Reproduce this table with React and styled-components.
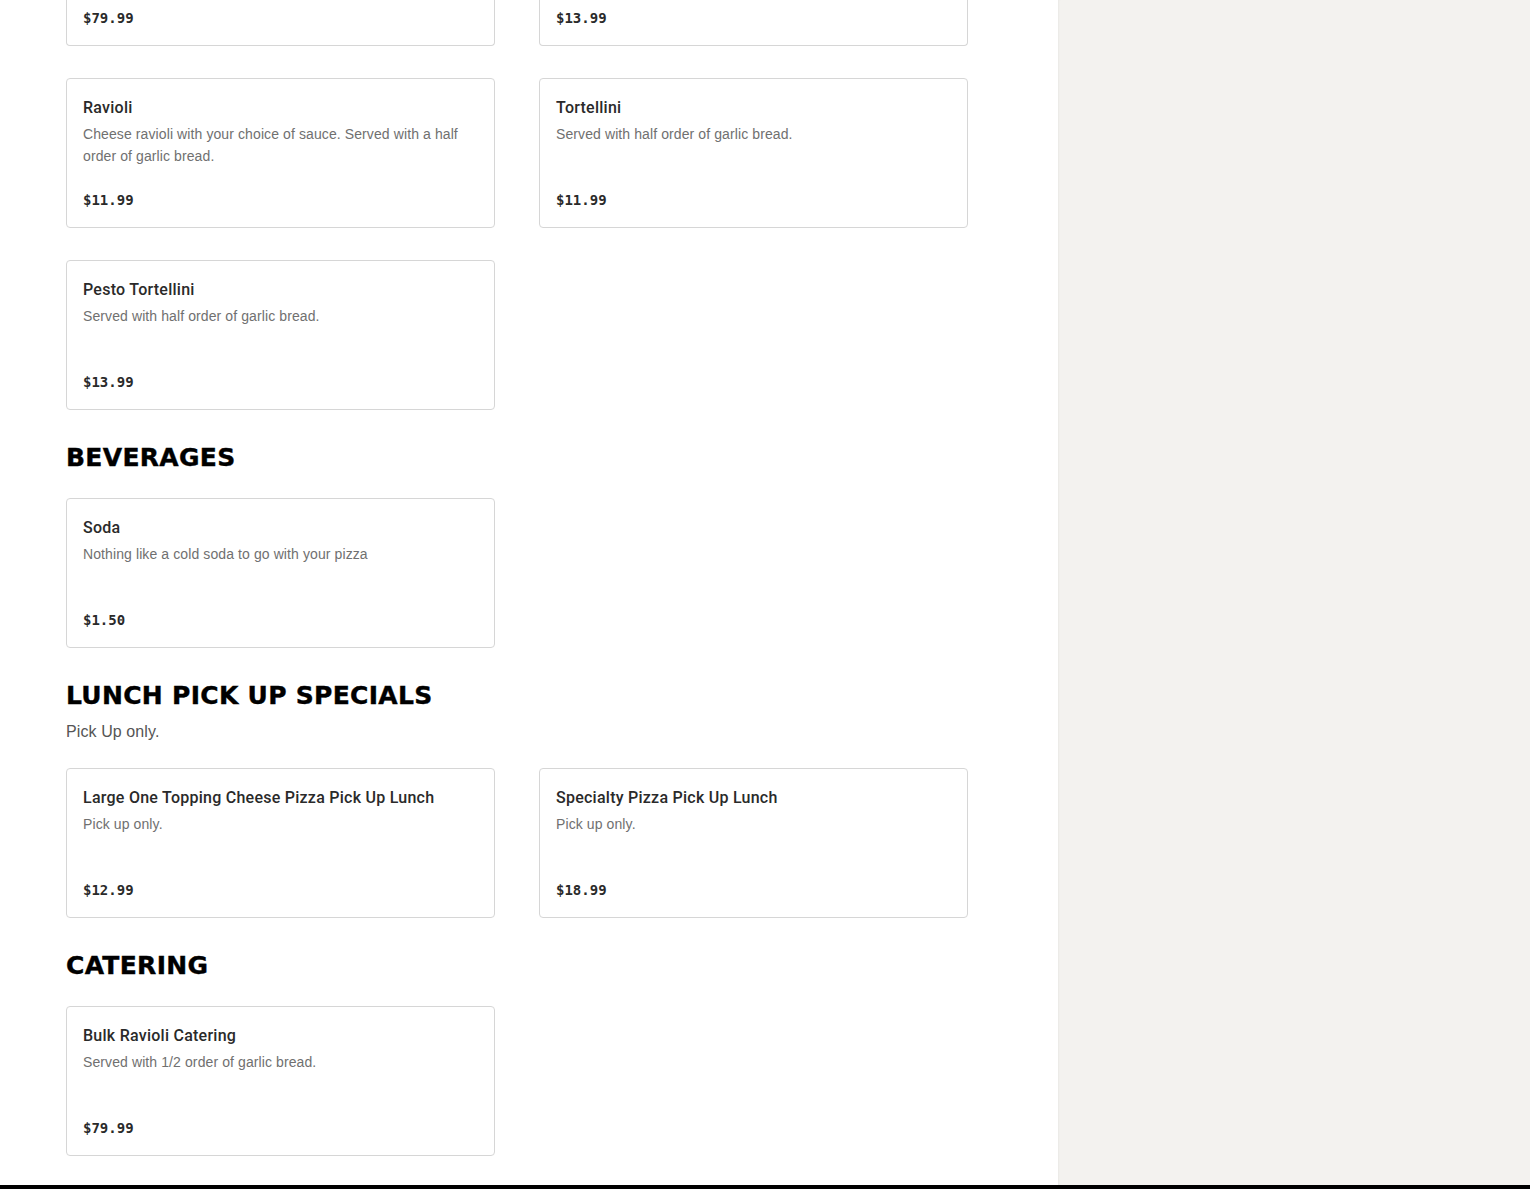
import styled, { createGlobalStyle } from "styled-components";

const GlobalStyle = createGlobalStyle`
  html, body {
    margin: 0;
    padding: 0;
    background: #fff;
    overflow: hidden;
  }
  body {
    font-family: "Liberation Sans", Arial, sans-serif;
  }
`;

const Page = styled.div`
  display: flex;
  flex-direction: column;
  width: 1530px;
  height: 1189px;
  overflow: hidden;
`;

const Body = styled.div`
  display: flex;
  flex: 1;
  min-height: 0;
`;

const Main = styled.main`
  width: 1058px;
  flex-shrink: 0;
  padding: 0 90px 0 66px;
  box-sizing: border-box;
  overflow: hidden;
`;

const Aside = styled.aside`
  flex: 1;
  background: #f3f2ef;
  box-shadow: inset 2px 0 2px -1px rgba(0, 0, 0, 0.04);
`;

const Footer = styled.footer`
  height: 4px;
  background: #000;
  flex-shrink: 0;
`;

const Section = styled.section`
  margin-top: 32px;

  &:first-child {
    margin-top: 0;
  }
`;

const Heading = styled.h2`
  margin: 0;
  font-family: "DejaVu Sans", sans-serif;
  font-weight: 700;
  font-size: 25px;
  line-height: 32px;
  letter-spacing: 0.3px;
  color: #000;
  text-transform: uppercase;
  -webkit-text-stroke: 0.4px #000;
`;

const Note = styled.p`
  margin: 8px 0 0;
  font-size: 16px;
  line-height: 24px;
  letter-spacing: 0.1px;
  color: #555;
`;

const Grid = styled.div`
  display: grid;
  grid-template-columns: repeat(2, 429px);
  column-gap: 44px;
  row-gap: 32px;
  margin-top: ${(p) => (p.$flush ? "0" : "24px")};
`;

const Card = styled.div`
  box-sizing: border-box;
  height: 150px;
  border: 1px solid #d6d6d6;
  border-radius: 4px;
  padding: 17px 16px 16px;
  display: flex;
  flex-direction: column;
  background: #fff;
`;

/* card scrolled partly out of view at the top of the list */
const TailCard = styled(Card)`
  height: 46px;
  border-top: none;
  border-radius: 0 0 4px 4px;
  padding-top: 0;
`;

const Name = styled.div`
  font-family: Roboto, "Liberation Sans", sans-serif;
  font-size: 16px;
  line-height: 24px;
  font-weight: 500;
  letter-spacing: 0.25px;
  color: #2a2a2a;
`;

const Desc = styled.div`
  margin-top: 3px;
  font-size: 14px;
  line-height: 22px;
  letter-spacing: 0.1px;
  color: #707070;
`;

const Price = styled.div`
  margin-top: auto;
  font-family: "DejaVu Sans Mono", "Liberation Mono", monospace;
  font-size: 14px;
  line-height: 22px;
  font-weight: 600;
  color: #2a2a2a;
`;

const sections = [
  {
    flush: true,
    tail: [{ price: "$79.99" }, { price: "$13.99" }],
    items: [
      {
        name: "Ravioli",
        desc: "Cheese ravioli with your choice of sauce. Served with a half order of garlic bread.",
        price: "$11.99",
      },
      { name: "Tortellini", desc: "Served with half order of garlic bread.", price: "$11.99" },
      { name: "Pesto Tortellini", desc: "Served with half order of garlic bread.", price: "$13.99" },
    ],
  },
  {
    title: "Beverages",
    items: [{ name: "Soda", desc: "Nothing like a cold soda to go with your pizza", price: "$1.50" }],
  },
  {
    title: "Lunch Pick Up Specials",
    note: "Pick Up only.",
    items: [
      { name: "Large One Topping Cheese Pizza Pick Up Lunch", desc: "Pick up only.", price: "$12.99" },
      { name: "Specialty Pizza Pick Up Lunch", desc: "Pick up only.", price: "$18.99" },
    ],
  },
  {
    title: "Catering",
    items: [{ name: "Bulk Ravioli Catering", desc: "Served with 1/2 order of garlic bread.", price: "$79.99" }],
  },
];

const MenuCard = ({ item }) => (
  <Card>
    <Name>{item.name}</Name>
    <Desc>{item.desc}</Desc>
    <Price>{item.price}</Price>
  </Card>
);

export default function App() {
  return (
    <Page>
      <GlobalStyle />
      <Body>
        <Main>
          {sections.map((s, i) => (
            <Section key={i}>
              {s.title && <Heading>{s.title}</Heading>}
              {s.note && <Note>{s.note}</Note>}
              <Grid $flush={s.flush}>
                {(s.tail || []).map((t, j) => (
                  <TailCard key={"t" + j}>
                    <Price>{t.price}</Price>
                  </TailCard>
                ))}
                {s.items.map((item, j) => (
                  <MenuCard key={j} item={item} />
                ))}
              </Grid>
            </Section>
          ))}
        </Main>
        <Aside />
      </Body>
      <Footer />
    </Page>
  );
}
